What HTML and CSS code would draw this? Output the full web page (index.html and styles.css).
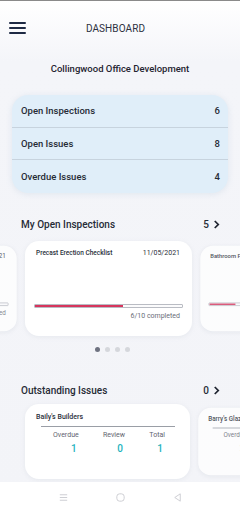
FILE: index.html
```html
<!DOCTYPE html>
<html lang="en">
<head>
  <meta charset="UTF-8">
  <meta name="viewport" content="width=device-width, initial-scale=1.0">
  <title>Dashboard</title>
  <link rel="stylesheet" href="styles.css">
</head>
<body>
  <div id="app">
    <!-- Top bar -->
    <header class="topbar">
      <button class="menu-btn" aria-label="menu">
        <span></span><span></span><span></span>
      </button>
      <h1 class="title">DASHBOARD</h1>
    </header>

    <main class="content">
      <h2 class="project">Collingwood Office Development</h2>

      <!-- Summary -->
      <div class="summary">
        <div class="summary-row"><span>Open Inspections</span><span>6</span></div>
        <div class="summary-row"><span>Open Issues</span><span>8</span></div>
        <div class="summary-row"><span>Overdue Issues</span><span>4</span></div>
      </div>

      <!-- Inspections -->
      <div class="section-head">
        <span>My Open Inspections</span>
        <span class="count">5 <svg viewBox="0 0 8 10" width="7" height="9"><path d="M2 1 L6 5 L2 9" fill="none" stroke="#1f2430" stroke-width="2"/></svg></span>
      </div>
      <div class="carousel">
        <div class="card insp side">
          <div class="card-top"><span>Formwork Check</span><span>10/05/2021</span></div>
          <div class="bar"><div class="fill" style="width: 40%"></div></div>
          <div class="done">4/10 completed</div>
        </div>
        <div class="card insp">
          <div class="card-top"><span>Precast Erection Checklist</span><span>11/05/2021</span></div>
          <div class="bar"><div class="fill" style="width: 60%"></div></div>
          <div class="done">6/10 completed</div>
        </div>
        <div class="card insp side">
          <div class="card-top"><span>Bathroom Fitout</span><span>12/05/2021</span></div>
          <div class="bar"><div class="fill" style="width: 20%"></div></div>
          <div class="done">2/10 completed</div>
        </div>
      </div>
      <div class="dots">
        <span class="dot active"></span><span class="dot"></span><span class="dot"></span><span class="dot"></span>
      </div>

      <!-- Issues -->
      <div class="section-head issues-head">
        <span>Outstanding Issues</span>
        <span class="count">0 <svg viewBox="0 0 8 10" width="7" height="9"><path d="M2 1 L6 5 L2 9" fill="none" stroke="#1f2430" stroke-width="2"/></svg></span>
      </div>
      <div class="carousel issues">
        <div class="card issue">
          <div class="issue-name">Baily's Builders</div>
          <div class="stats">
            <div class="stat"><span>Overdue</span><b>1</b></div>
            <div class="stat"><span>Review</span><b>0</b></div>
            <div class="stat"><span>Total</span><b>1</b></div>
          </div>
        </div>
        <div class="card issue side">
          <div class="issue-name">Barry's Glazing</div>
          <div class="stats">
            <div class="stat"><span>Overdue</span><b>2</b></div>
            <div class="stat"><span>Review</span><b>1</b></div>
            <div class="stat"><span>Total</span><b>3</b></div>
          </div>
        </div>
      </div>
    </main>

    <!-- Android nav -->
    <nav class="navbar">
      <svg viewBox="0 0 12 12" width="11" height="11"><path d="M2 3 H10 M2 6 H10 M2 9 H10" stroke="#c9cbd0" stroke-width="1"/></svg>
      <svg viewBox="0 0 12 12" width="11" height="11"><rect x="2" y="2" width="8" height="8" rx="3" fill="none" stroke="#c9cbd0" stroke-width="1"/></svg>
      <svg viewBox="0 0 12 12" width="11" height="11"><path d="M9 2 L3 6 L9 10 Z" fill="none" stroke="#c9cbd0" stroke-width="1"/></svg>
    </nav>
  </div>
</body>
</html>
```

FILE: styles.css
```css
/* Reset */
* {
  margin: 0;
  padding: 0;
  box-sizing: border-box;
}

body {
  font-family: Roboto, "Noto Sans", Arial, sans-serif;
  background-color: #f3f4f8;
  color: #262b36;
  width: 240px;
  height: 512px;
  overflow: hidden;
}

#app {
  height: 512px;
  display: flex;
  flex-direction: column;
  border-top: 1px solid #8a8a8a;
  background: linear-gradient(#ffffff 0px, #f4f5f9 60px, #f3f4f8 100%);
}

/* Top bar */
.topbar {
  height: 48px;
  display: flex;
  align-items: center;
  padding-left: 9px;
  padding-top: 6px;
}

.menu-btn {
  width: 17px;
  height: 12px;
  background: none;
  border: none;
  display: flex;
  flex-direction: column;
  justify-content: space-between;
}

.menu-btn span {
  display: block;
  height: 2px;
  background-color: #1e2a44;
  border-radius: 1px;
}

.title {
  flex: 1;
  text-align: center;
  font-size: 10px;
  font-weight: 400;
  color: #2d3140;
  margin-right: 35px;
  letter-spacing: 0.1px;
}

.content {
  flex: 1;
  overflow: hidden;
}

.project {
  text-align: center;
  font-size: 9.5px;
  font-weight: 500;
  color: #1f2430;
  margin-top: 14px;
  margin-bottom: 21px;
}

/* Summary card */
.summary {
  margin: 0 12px;
  background-color: #e0eef9;
  border-radius: 16px;
  box-shadow: 0 1px 6px rgba(140, 170, 200, 0.2);
}

.summary-row {
  display: flex;
  justify-content: space-between;
  align-items: center;
  height: 32.5px;
  padding: 0 8px 0 9px;
  font-size: 9.5px;
  font-weight: 500;
  color: #262b36;
  border-bottom: 1px solid #c7d3de;
}

.summary-row:last-child {
  border-bottom: none;
}

/* Section heads */
.section-head {
  display: flex;
  justify-content: space-between;
  align-items: center;
  padding: 0 20px 0 21px;
  margin-top: 26px;
  margin-bottom: 11px;
  font-size: 10px;
  font-weight: 500;
  color: #262b36;
}

.count {
  display: flex;
  align-items: center;
  gap: 4px;
}

.issues-head {
  margin-top: 33px;
  margin-bottom: 8px;
}

/* Carousel */
.carousel {
  display: flex;
  align-items: center;
  margin-left: -142px;
}

.card {
  flex: 0 0 167px;
  background-color: #ffffff;
  border-radius: 14px;
  box-shadow: 0 1px 4px rgba(200, 205, 215, 0.3);
}

.side {
  transform: scale(0.9);
  opacity: 0.8;
}

.insp {
  height: 95px;
  padding: 8px 12px 0 11px;
  display: flex;
  flex-direction: column;
}

.card-top {
  display: flex;
  justify-content: space-between;
  font-size: 6.5px;
  font-weight: 500;
  color: #2a2f3a;
}

.card-top span:last-child {
  font-weight: 400;
  font-size: 7px;
}

.bar {
  margin-top: 47px;
  height: 4px;
  margin-left: -2px;
  margin-right: -3px;
  background-color: #fbfbfc;
  border: 1px solid #b9bcc3;
  border-radius: 1px;
  overflow: hidden;
}

.fill {
  height: 100%;
  background-color: #d6355d;
}

.done {
  text-align: right;
  font-size: 7px;
  color: #6a6e78;
  margin-top: 4px;
}

.dots {
  display: flex;
  justify-content: center;
  gap: 5px;
  margin-top: 11px;
  margin-right: 16px;
}

.dot {
  width: 5px;
  height: 5px;
  border-radius: 50%;
  background-color: #d5d7dc;
}

.dot.active {
  background-color: #6e7280;
}

/* Issue cards */
.issues {
  margin-left: 25px;
}

.issue {
  flex-basis: 165px;
  height: 75px;
  padding: 9px 22px 0 11px;
}

.issue-name {
  font-size: 7px;
  font-weight: 500;
  color: #2a2f3a;
  padding-bottom: 5px;
}

.stats {
  display: flex;
  justify-content: space-between;
  border-top: 1px solid #9a9ea6;
  margin-left: 5px;
  margin-right: -7px;
  padding: 4px 10px 0 12px;
}

.stat {
  display: flex;
  flex-direction: column;
  align-items: flex-end;
  font-size: 7px;
  color: #5f6470;
}

.stat b {
  font-size: 10px;
  font-weight: 500;
  color: #1eb2bd;
  margin-top: 4px;
  margin-right: 2px;
}

/* Android nav bar */
.navbar {
  height: 30px;
  flex-shrink: 0;
  background-color: #ffffff;
  display: flex;
  justify-content: center;
  align-items: center;
  gap: 46px;
}
```
